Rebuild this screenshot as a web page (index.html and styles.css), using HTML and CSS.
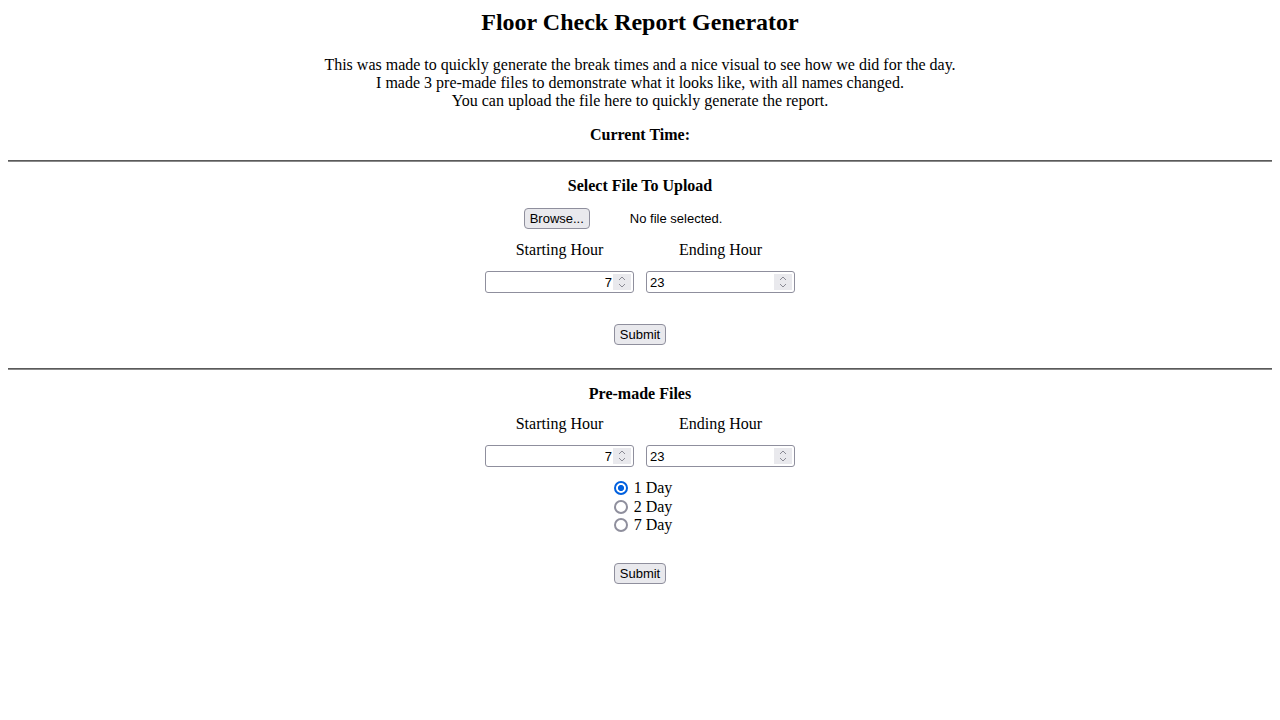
FILE: index.html
```html
<!DOCTYPE html>
<html lang="en">
<head>
<meta charset="utf-8">
<title>Floor Check Report Generator</title>
<link rel="stylesheet" href="styles.css">
</head>
<body>
<header class="intro-block">
  <h2 class="title">Floor Check Report Generator</h2>
  <p class="intro">This was made to quickly generate the break times and a nice visual to see how we did for the day.<br>I made 3 pre-made files to demonstrate what it looks like, with all names changed.<br>You can upload the file here to quickly generate the report.</p>
  <p class="time">Current Time:</p>
</header>
<hr class="rule">
<section class="panel upload">
  <h4 class="panel-title">Select File To Upload</h4>
  <div class="file-row">
    <button class="btn" type="button">Browse...</button>
    <span class="file-status">No file selected.</span>
  </div>
  <div class="hours">
    <div class="hour-col">
      <label class="hour-label">Starting Hour</label>
      <div class="num-box">
        <input class="num-input right" type="text" value="7">
        <span class="spin"><svg width="10" height="16" viewBox="0 0 10 16"><path d="M2 6 L5 3 L8 6 M2 10 L5 13 L8 10" fill="none" stroke="#8a8a94" stroke-width="1"/></svg></span>
      </div>
    </div>
    <div class="hour-col">
      <label class="hour-label">Ending Hour</label>
      <div class="num-box">
        <input class="num-input" type="text" value="23">
        <span class="spin"><svg width="10" height="16" viewBox="0 0 10 16"><path d="M2 6 L5 3 L8 6 M2 10 L5 13 L8 10" fill="none" stroke="#8a8a94" stroke-width="1"/></svg></span>
      </div>
    </div>
  </div>
  <button class="btn submit" type="button">Submit</button>
</section>
<hr class="rule">
<section class="panel premade">
  <h4 class="panel-title">Pre-made Files</h4>
  <div class="hours">
    <div class="hour-col">
      <label class="hour-label">Starting Hour</label>
      <div class="num-box">
        <input class="num-input right" type="text" value="7">
        <span class="spin"><svg width="10" height="16" viewBox="0 0 10 16"><path d="M2 6 L5 3 L8 6 M2 10 L5 13 L8 10" fill="none" stroke="#8a8a94" stroke-width="1"/></svg></span>
      </div>
    </div>
    <div class="hour-col">
      <label class="hour-label">Ending Hour</label>
      <div class="num-box">
        <input class="num-input" type="text" value="23">
        <span class="spin"><svg width="10" height="16" viewBox="0 0 10 16"><path d="M2 6 L5 3 L8 6 M2 10 L5 13 L8 10" fill="none" stroke="#8a8a94" stroke-width="1"/></svg></span>
      </div>
    </div>
  </div>
  <div class="radios">
    <label class="radio-row"><input class="radio" type="radio" name="days" checked> 1 Day</label>
    <label class="radio-row"><input class="radio" type="radio" name="days"> 2 Day</label>
    <label class="radio-row"><input class="radio" type="radio" name="days"> 7 Day</label>
  </div>
  <button class="btn submit submit2" type="button">Submit</button>
</section>
</body>
</html>
```
FILE: styles.css
```css
html, body {
  margin: 0;
  padding: 0;
  background: #fff;
}
body {
  padding: 8px;
  font-family: "Liberation Serif", "Times New Roman", serif;
  font-size: 16px;
  color: #000;
}
.intro-block {
  text-align: center;
}
.title {
  margin: 1px 0 20px;
  font-size: 24px;
  line-height: 27px;
  font-weight: bold;
}
.intro {
  margin: 0;
  line-height: 18px;
}
.time {
  margin: 16px 0 0;
  line-height: 18px;
  font-weight: bold;
}
.rule {
  margin: 0;
  border: none;
  border-top: 1px solid #5a5a5a;
  border-bottom: 1px solid #8a8a8a;
  height: 0;
}
.intro-block + .rule {
  margin-top: 16px;
}
.panel {
  display: flex;
  flex-direction: column;
  align-items: center;
}
.panel-title {
  margin: 15px 0 0;
  font-size: 16px;
  line-height: 18px;
  font-weight: bold;
}
.file-row {
  display: flex;
  align-items: center;
  margin-top: 13px;
  margin-right: 34px;
  gap: 40px;
}
.btn {
  font-family: "Liberation Sans", Arial, sans-serif;
  font-size: 13px;
  height: 21px;
  padding: 0 5px;
  background: #e9e9ed;
  border: 1px solid #8f8f9d;
  border-radius: 4px;
  color: #000;
  line-height: 19px;
}
.file-status {
  font-family: "Liberation Sans", Arial, sans-serif;
  font-size: 13px;
}
.hours {
  display: flex;
  gap: 12px;
  margin-top: 12px;
}
.hour-col {
  display: flex;
  flex-direction: column;
  align-items: center;
  width: 149px;
}
.hour-label {
  line-height: 18px;
}
.num-box {
  margin-top: 12px;
  display: flex;
  align-items: stretch;
  width: 149px;
  height: 22px;
  box-sizing: border-box;
  border: 1px solid #8f8f9d;
  border-radius: 3px;
  background: #fff;
}
.num-input {
  flex: 1;
  min-width: 0;
  border: none;
  outline: none;
  padding: 0 0 0 3px;
  margin: 0;
  font-family: "Liberation Sans", Arial, sans-serif;
  font-size: 13px;
  background: transparent;
  color: #000;
}
.num-input.right {
  text-align: right;
  padding: 0 1px 0 3px;
}
.spin {
  width: 18px;
  margin: 2px 2px 2px 0;
  background: #e9e9ed;
  display: flex;
  align-items: center;
  justify-content: center;
}
.submit {
  margin-top: 31px;
}
.upload .submit {
  margin-bottom: 23px;
}
.radios {
  display: flex;
  flex-direction: column;
  margin-top: 12px;
  margin-left: 6px;
}
.radio-row {
  display: flex;
  align-items: center;
  line-height: 18.5px;
  height: 18.5px;
}
.radio {
  appearance: none;
  -webkit-appearance: none;
  width: 14px;
  height: 14px;
  margin: 0 6px 0 0;
  box-sizing: border-box;
  border: 2px solid #8f8f9d;
  border-radius: 50%;
  background: #fff;
}
.radio:checked {
  border-color: #0060df;
  background: radial-gradient(circle, #0060df 0 2.8px, #fff 3.2px);
}
.submit2 {
  margin-top: 28px;
}
```
